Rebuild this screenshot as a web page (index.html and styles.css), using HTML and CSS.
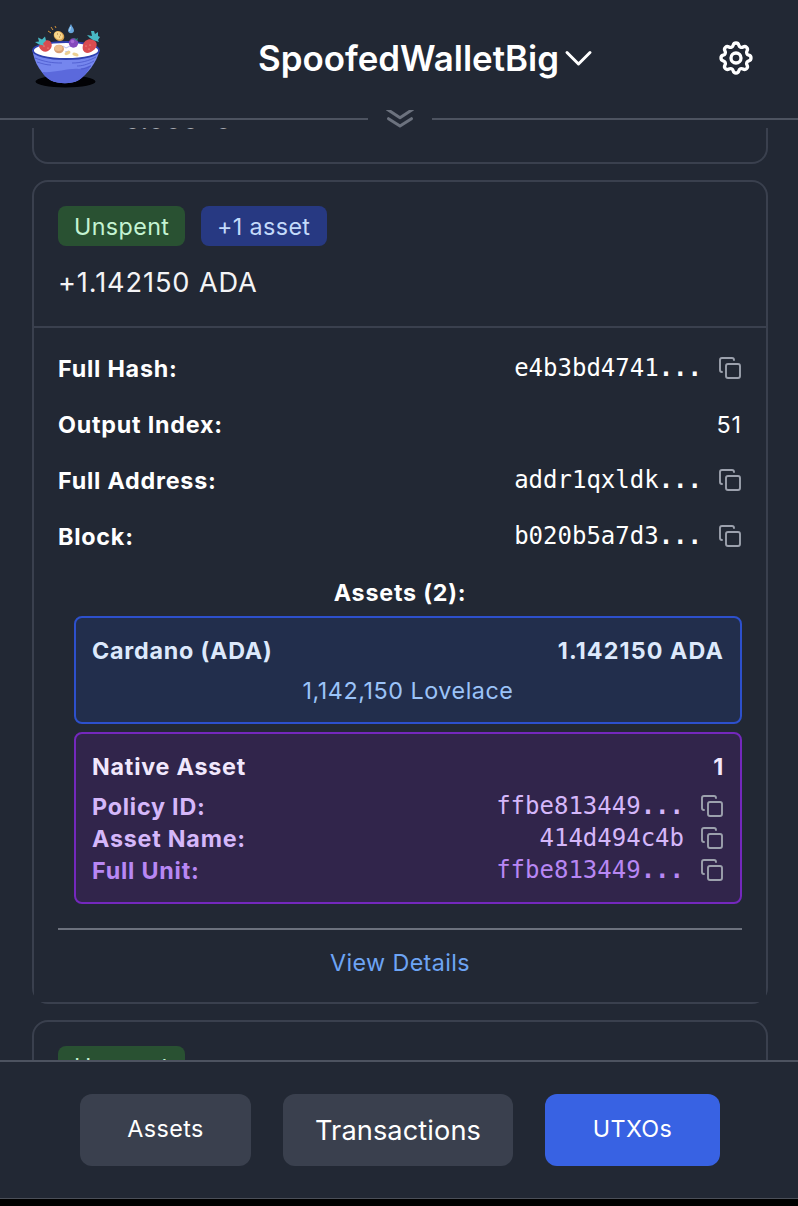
FILE: index.html
```html
<!DOCTYPE html>
<html lang="en">
<head>
<meta charset="utf-8">
<title>SpoofedWalletBig</title>
<link rel="stylesheet" href="styles.css">
</head>
<body>
<svg class="defs" width="0" height="0">
  <symbol id="copy" viewBox="0 0 24 24"><rect x="8" y="8" width="14" height="14" rx="2"/><path d="M4 16c-1.100 0-2-.9-2-2V4c0-1.100.9-2 2-2h10c1.100 0 2 .9 2 2"/></symbol>
</svg>
<div class="app">
  <header class="header">
    <svg class="logo" viewBox="0 0 100 80">
      <ellipse cx="45.500" cy="66.500" rx="30" ry="6" fill="#020205"/>
      <path d="M12.500 35C14 48 22 60 31 65.500c8 3.500 20 3.500 27 0 9-6 19-18 21.500-30.500z" fill="#7586ee"/>
      <path d="M22 57c14 1 26-4 37-3 4-1 8-2 12-4-3 7-8 13-13 15.500-7 3.500-19 3.500-27 0-4-2-7-5-9-8.500z" fill="#5b69dc"/>
      <path d="M15 43c10 4 17 5 27 5M17 47c6 2 10 3 14 3M76 42c-7 4-16 6-24 6M74 46c-7 4-13 5-17 5M71 51c-4 2-7 3-10 3" fill="none" stroke="#4a58cb" stroke-width=".8"/>
      <ellipse cx="46" cy="35.500" rx="33" ry="8.500" fill="#fff" stroke="#3041b0" stroke-width="1.800"/>
      <path d="M40 33l3-2 3 2 4-2 3 1M45 37l4-1" fill="none" stroke="#b8bdf2" stroke-width="1"/>
      <path d="M19 32c1-5 7-8 11-6 3 3 2 8-2 10-3 2-7 0-9-4z" fill="#d94c50"/>
      <path d="M15 27l4-.5-1-4 4 2 3-3 1 4-3 3 1 2-5-1z" fill="#48b9c5"/>
      <path d="M63 30c1-6 9-8 13-3 3 5-4 11-9 11-4-1-5-4-4-8z" fill="#d94c50"/>
      <path d="M67 20l5 1-1-5 3 0 1 3 3-2 0 4 2 1-2 3 1 2-6-2-3-2z" fill="#48b9c5"/>
      <g fill="#ffb9a0"><circle cx="24" cy="31" r=".6"/><circle cx="28" cy="33" r=".6"/><circle cx="66" cy="31" r=".6"/><circle cx="70" cy="30" r=".6"/><circle cx="69" cy="34" r=".6"/></g>
      <ellipse cx="39" cy="34" rx="5" ry="4.200" fill="#d9a074"/><ellipse cx="38.500" cy="33" rx="4" ry="3" fill="#edbc8d"/>
      <ellipse cx="47.500" cy="38" rx="3.200" ry="1.700" transform="rotate(-25 47.500 38)" fill="#ecd092"/><ellipse cx="55.500" cy="39.500" rx="3.200" ry="1.700" transform="rotate(20 55.500 39.500)" fill="#ecd092"/>
      <circle cx="53.500" cy="28" r="4.700" fill="#8549bd"/><circle cx="52.500" cy="26.500" r="1.800" fill="#a96bd7"/><path d="M53 23l3 1 2-1-1 3z" fill="#29877e"/>
      <ellipse cx="39" cy="21" rx="5.600" ry="4.600" transform="rotate(35 39 21)" fill="#d9a24d"/><ellipse cx="38.500" cy="20.500" rx="4.600" ry="3.700" transform="rotate(35 38.500 20.500)" fill="#f7d68d"/><path d="M37 19h1M39 22h1M40 20h1" stroke="#a97536"/>
      <path d="M51 9c-2 4-3 5-3 7 1 3 5 3 6 0 0-3-2-4-3-7z" fill="#67a5dc"/><path d="M50.500 12l-1 4" stroke="#b9ddf5"/>
      <path d="M28 16l3 2M31 12l2 3M35 11l1 2" stroke="#d6943a" stroke-width="1"/>
    </svg>
    <div class="wallet"><span class="wallet-name">SpoofedWalletBig</span>
      <svg class="chevron" viewBox="0 0 30 20"><path d="M3 4.500L14.500 16L26 4.500"/></svg>
    </div>
    <svg class="gear" viewBox="0 0 24 24"><path d="M10.325 4.317c.426-1.756 2.924-1.756 3.350 0a1.724 1.724 0 002.573 1.066c1.543-.94 3.310.826 2.370 2.370a1.724 1.724 0 001.065 2.572c1.756.426 1.756 2.924 0 3.350a1.724 1.724 0 00-1.066 2.573c.94 1.543-.826 3.310-2.370 2.370a1.724 1.724 0 00-2.572 1.065c-.426 1.756-2.924 1.756-3.350 0a1.724 1.724 0 00-2.573-1.066c-1.543.94-3.310-.826-2.370-2.370a1.724 1.724 0 00-1.065-2.572c-1.756-.426-1.756-2.924 0-3.350a1.724 1.724 0 001.066-2.573c-.94-1.543.826-3.310 2.370-2.370.996.608 2.296.07 2.572-1.065z"/><path d="M15 12a3 3 0 11-6 0 3 3 0 016 0z"/></svg>
  </header>
  <div class="expander">
    <span class="rule"></span>
    <svg class="double" viewBox="0 0 32 18"><path d="M3.500-.5L16 7.700L28.500-.5M4.500 8.700L16 16L27.500 8.700"/></svg>
    <span class="rule"></span>
  </div>
  <main class="list">
    <article class="card">
      <div class="card-head">
        <div class="badges"><span class="badge green">Unspent</span></div>
        <div class="amount">0.000 0</div>
      </div>
    </article>
    <article class="card">
      <div class="card-head ruled">
        <div class="badges"><span class="badge green">Unspent</span><span class="badge blue">+1 asset</span></div>
        <div class="amount">+1.142150 ADA</div>
      </div>
      <div class="card-body">
        <div class="fields">
          <div class="row"><b>Full Hash:</b><span class="value"><code>e4b3bd4741<i>...</i></code><svg class="copy"><use href="#copy"/></svg></span></div>
          <div class="row"><b>Output Index:</b><span class="number">51</span></div>
          <div class="row"><b>Full Address:</b><span class="value"><code>addr1qxldk<i>...</i></code><svg class="copy"><use href="#copy"/></svg></span></div>
          <div class="row"><b>Block:</b><span class="value"><code>b020b5a7d3<i>...</i></code><svg class="copy"><use href="#copy"/></svg></span></div>
        </div>
        <h2 class="assets-title"><b>Assets (2):</b></h2>
        <div class="assets">
          <section class="asset ada">
            <div class="row top"><b>Cardano (ADA)</b><b class="total">1.142150 ADA</b></div>
            <div class="lovelace">1,142,150 Lovelace</div>
          </section>
          <section class="asset native">
            <div class="row top"><b>Native Asset</b><b>1</b></div>
            <div class="row"><b>Policy ID:</b><span class="value"><code>ffbe813449<i>...</i></code><svg class="copy"><use href="#copy"/></svg></span></div>
            <div class="row"><b>Asset Name:</b><span class="value"><code>414d494c4b</code><svg class="copy"><use href="#copy"/></svg></span></div>
            <div class="row unit"><b>Full Unit:</b><span class="value"><code>ffbe813449<i>...</i></code><svg class="copy"><use href="#copy"/></svg></span></div>
          </section>
        </div>
        <div class="details">View Details</div>
      </div>
    </article>
    <article class="card">
      <div class="card-head">
        <div class="badges"><span class="badge green">Unspent</span></div>
      </div>
    </article>
  </main>
  <nav class="tabs">
    <button class="tab assets-tab">Assets</button>
    <button class="tab transactions-tab">Transactions</button>
    <button class="tab utxos-tab">UTXOs</button>
  </nav>
</div>
</body>
</html>
```
FILE: styles.css
```css
* { box-sizing: border-box; }
body { margin: 0; background: #000; color: #fff; font: 23.3px/32px Inter, sans-serif; letter-spacing: .38px; overflow: hidden; }
b { display: block; height: 32px; padding-top: 1px; font-weight: 650; letter-spacing: .78px; }
.defs { display: block; height: 0; }
.app { display: flex; flex-direction: column; height: 1199px; background: #222834; border-bottom: 1px solid #4b4f58; }
.header { display: flex; align-items: flex-start; height: 110px; flex: none; padding-left: 20px; }
.logo { width: 100px; height: 80px; margin-top: 15px; }
.wallet { display: flex; align-items: center; margin: 36px 0 0 138px; height: 44px; width: 458px; }
.wallet-name { font-size: 34.9px; line-height: 44px; font-weight: 600; letter-spacing: 0; white-space: nowrap; }
.chevron { width: 30px; height: 20px; margin-left: 5px; fill: none; stroke: #fff; stroke-width: 3; stroke-linecap: round; stroke-linejoin: round; }
.gear { width: 40px; height: 40px; margin-top: 38px; fill: none; stroke: #fff; stroke-width: 2; stroke-linecap: round; stroke-linejoin: round; }
.expander { display: flex; align-items: center; height: 18px; flex: none; }
.rule { width: 368px; height: 2px; background: #4d5360; }
.rule:last-child { flex: 1; }
.double { width: 32px; height: 18px; margin: 0 16px; fill: none; stroke: #6c727e; stroke-width: 3; stroke-linecap: round; stroke-linejoin: round; overflow: hidden; }
.list { display: flex; flex-direction: column; gap: 16px; height: 932px; flex: none; padding: 0 30px 0 32px; overflow: hidden; }
.card { flex: none; border: 2px solid #3a404e; border-radius: 16px; }
.card:first-child { margin-top: -112px; }
.card-head { height: 144px; padding: 24px; }
.card-head.ruled { height: 146px; border-bottom: 2px solid #3a404e; }
.badges { display: flex; gap: 16px; }
.badge { height: 40px; padding: 5px 16px 3px; border-radius: 8px; white-space: nowrap; }
.green { width: 127px; background: #295132; color: #c4f3d2; }
.blue { width: 126px; background: #273982; color: #c3dafa; }
.amount { margin-top: 16px; padding-top: 1px; font-size: 27.2px; line-height: 40px; letter-spacing: .88px; color: #f4f4f6; }
.card:first-child .amount { padding: 2px 0 0 66px; letter-spacing: 0; word-spacing: 8px; color: #a6a9af; }
.card-body { padding: 24px; background: #222834; }
.fields { display: grid; gap: 24px; }
.row { display: flex; justify-content: space-between; height: 32px; }
.value { display: flex; align-items: center; gap: 16px; }
.number { padding-top: 1px; letter-spacing: .9px; }
code { font: 24px/32px "DejaVu Sans Mono", monospace; letter-spacing: 0; }
code i { font-style: normal; font-weight: 700; }
.copy { display: block; width: 24px; height: 24px; fill: none; stroke: #9ca1ad; stroke-width: 1.9; stroke-linecap: round; stroke-linejoin: round; }
.assets-title { margin: 24px 0 8px; font: inherit; text-align: center; }
.assets { display: grid; gap: 8px; padding-left: 16px; }
.asset { border: 2px solid; border-radius: 8px; padding: 16px; }
.top { margin-bottom: 8px; }
.total { letter-spacing: 1.1px; }
.ada { border-color: #2d50cc; background: #222e4c; color: #dde9fc; }
.lovelace { height: 32px; padding-top: 1px; text-align: center; color: #9bc3f8; letter-spacing: .55px; }
.native { border-color: #7428bd; background: #31254b; color: #d5b7fa; }
.native .top { color: #f1e8fd; }
.native .unit { color: #b887f4; }
.details { height: 50px; margin-top: 24px; padding-top: 17px; border-top: 2px solid #6c717d; text-align: center; color: #6da4f4; }
.tabs { display: flex; gap: 32px; padding: 32px 78px 32px 80px; height: 138px; flex: none; border-top: 2px solid #4d5360; }
.tab { height: 72px; padding: 0 0 3px; border: 0; border-radius: 12px; background: #3a404e; color: #fff; font: 23.3px/32px Inter, sans-serif; letter-spacing: .4px; }
.assets-tab { width: 171px; }
.transactions-tab { width: 230px; font-size: 27.2px; padding: 1px 0 0; letter-spacing: .1px; }
.utxos-tab { width: 175px; background: #3862e3; }
```
